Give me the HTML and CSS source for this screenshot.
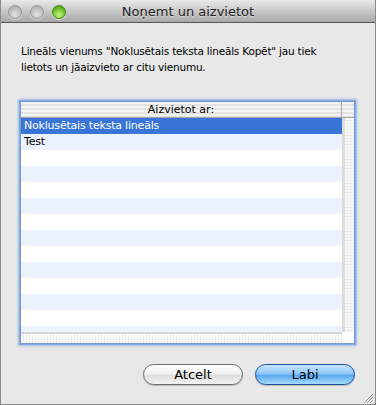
FILE: index.html
```html
<!DOCTYPE html>
<html lang="lv">
<head>
    <meta charset="UTF-8">
    <title>Noņemt un aizvietot</title>
    <link rel="stylesheet" href="styles.css">
</head>
<body>
    <div class="window">
        <div class="titlebar">
            <div class="lights">
                <span class="light"></span>
                <span class="light"></span>
                <span class="light green"></span>
            </div>
            <div class="title">Noņemt un aizvietot</div>
        </div>

        <div class="content">
            <p class="message">Lineāls vienums "Noklusētais teksta lineāls Kopēt" jau tiek lietots un jāaizvieto ar citu vienumu.</p>

            <div class="list">
                <div class="list-head">
                    <div class="head-cell">Aizvietot ar:</div>
                    <div class="head-corner"></div>
                </div>
                <div class="list-main">
                    <div class="rows">
                        <div class="row selected">Noklusētais teksta lineāls</div>
                        <div class="row">Test</div>
                        <div class="row"></div>
                        <div class="row"></div>
                        <div class="row"></div>
                        <div class="row"></div>
                        <div class="row"></div>
                        <div class="row"></div>
                        <div class="row"></div>
                        <div class="row"></div>
                        <div class="row"></div>
                        <div class="row"></div>
                        <div class="row"></div>
                        <div class="row"></div>
                    </div>
                    <div class="vstrip"></div>
                </div>
                <div class="hstrip"></div>
            </div>

            <div class="buttons">
                <button class="btn">Atcelt</button>
                <button class="btn default">Labi</button>
            </div>
        </div>

        <svg class="grip" width="12" height="10" viewBox="0 0 12 10">
            <path d="M11 1 L2 10 M11 4 L5 10 M11 7 L8 10" stroke="#8c8c8c" stroke-width="1" fill="none"/>
            <path d="M12 1 L3 10 M12 4 L6 10 M12 7 L9 10" stroke="#ffffff" stroke-width="1" fill="none"/>
        </svg>
    </div>
</body>
</html>
```

FILE: styles.css
```css
/* General */
* {
    margin: 0;
    padding: 0;
    box-sizing: border-box;
}

body {
    background-color: #e8e8e8;
    font-family: 'DejaVu Sans', sans-serif;
    color: #000;
}

/* Window */
.window {
    position: relative;
    width: 376px;
    height: 405px;
    background-color: #e8e8e8;
    border-left: 1px solid #8a8a8a;
    border-right: 1px solid #8a8a8a;
    border-bottom: 1px solid #8a8a8a;
}

.titlebar {
    height: 23px;
    display: flex;
    align-items: center;
    background: linear-gradient(#e9e9e9, #c8c8c8 50%, #a9a9a9);
    border-bottom: 1px solid #555;
    position: relative;
}

.lights {
    display: flex;
    gap: 8px;
    padding-left: 7px;
    padding-top: 1px;
}

.light {
    width: 14px;
    height: 14px;
    border-radius: 50%;
    background: radial-gradient(circle at 50% 70%, #e4e4e4, #bcbcbc 60%, #a0a0a0);
    border: 1px solid #9b9b9b;
    box-shadow: 0 1px 0 rgba(255, 255, 255, 0.5);
}

.light.green {
    background: radial-gradient(circle at 50% 75%, #c8f58a, #6fc42c 55%, #3f8f10);
    border-color: #4b8a1e;
}

.title {
    position: absolute;
    left: 0;
    right: 0;
    top: 4px;
    text-align: center;
    font-size: 13px;
    color: #222;
    text-shadow: 0 1px 0 rgba(255, 255, 255, 0.4);
}

/* Content */
.content {
    padding: 20px 19px 0 19px;
}

.message {
    font-size: 10.5px;
    letter-spacing: -0.2px;
    line-height: 16px;
    padding-left: 1px;
    width: 330px;
}

/* List */
.list {
    margin-top: 26px;
    width: 335px;
    height: 243px;
    border: 1px solid #7d9bc9;
    box-shadow: 0 0 0 1px #7fa9e3, 0 0 2px 2px rgba(110, 160, 230, 0.6);
    background-color: #fff;
    display: flex;
    flex-direction: column;
}

.list-head {
    display: flex;
    height: 16px;
    border-bottom: 1px solid #a6a6a6;
    background: repeating-linear-gradient(#f4f4f4 0, #f4f4f4 2px, #e3e3e3 2px, #e3e3e3 4px);
}

.head-cell {
    flex: 1;
    text-align: center;
    font-size: 11px;
    line-height: 15px;
    border-right: 1px solid #a6a6a6;
}

.head-corner {
    width: 12px;
}

.list-main {
    display: flex;
    height: 214px;
}

.rows {
    flex: 1;
    overflow: hidden;
}

.row {
    height: 16px;
    font-size: 11px;
    letter-spacing: -0.2px;
    line-height: 16px;
    padding-left: 3px;
    background-color: #fff;
}

.row:nth-child(even) {
    background-color: #edf3fe;
}

.row.selected {
    background-color: #3875d7;
    color: #fff;
}

.vstrip {
    width: 12px;
    border-left: 3px solid #dcdcdc;
    background: repeating-linear-gradient(#f7f7f7 0, #f7f7f7 2px, #ececec 2px, #ececec 3px);
}

.hstrip {
    flex: 1;
    border-top: 2px solid #d6d6d6;
    background: repeating-linear-gradient(90deg, #fbfbfb 0, #fbfbfb 2px, #ececec 2px, #ececec 3px);
    margin-right: 12px;
}

/* Buttons */
.buttons {
    display: flex;
    justify-content: flex-end;
    gap: 12px;
    margin-top: 20px;
    padding-right: 1px;
}

.btn {
    width: 100px;
    height: 21px;
    border-radius: 11px;
    border: 1px solid #6e6e6e;
    background: linear-gradient(#fdfdfd, #f1f1f1 45%, #dedede 55%, #f2f2f2);
    font-family: 'DejaVu Sans', sans-serif;
    font-size: 13px;
    color: #000;
    box-shadow: 0 1px 1px rgba(0, 0, 0, 0.2);
}

.btn.default {
    border-color: #1f4e9a;
    background: linear-gradient(#c8e4fc, #8fc8f7 45%, #5aa8ee 55%, #a6dbfd);
}

.grip {
    position: absolute;
    right: 1px;
    bottom: 1px;
}
```
